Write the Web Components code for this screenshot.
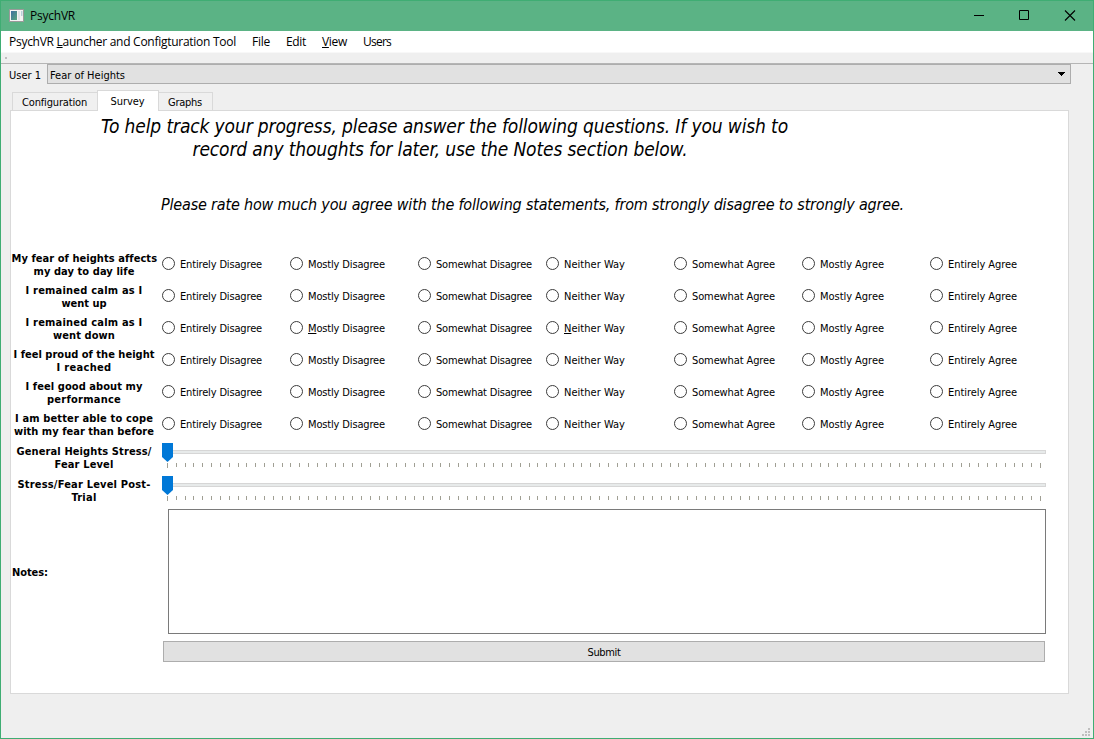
<!DOCTYPE html>
<html lang="en">
<head>
<meta charset="utf-8">
<title>PsychVR</title>
<style>
html,body{margin:0;width:1094px;height:739px;overflow:hidden;background:#efefef}
</style>
</head>
<body>
<psych-window></psych-window>
<script>
const UI = 'font-family:"DejaVu Sans Condensed","DejaVu Sans",sans-serif;font-stretch:condensed;font-size:11px;line-height:13px;color:#000;';

// A run of text whose tracking is adjusted to occupy the requested width.
customElements.define('fit-text', class extends HTMLElement {
  connectedCallback() {
    if (this.shadowRoot) return;
    const root = this.attachShadow({mode: 'open'});
    root.innerHTML = '<style>:host{display:block;white-space:pre}span{display:inline-block}</style><span><slot></slot></span>';
    const span = root.querySelector('span');
    const target = +this.getAttribute('w');
    this.style.width = target + 'px';
    const natural = span.getBoundingClientRect().width;
    this.style.letterSpacing = ((target - natural) / this.textContent.length) + 'px';
  }
});

customElements.define('title-bar', class extends HTMLElement {
  connectedCallback() {
    this.attachShadow({mode: 'open'}).innerHTML = `<style>
      :host{display:flex;height:30px;align-items:center;background:#5bb385;font:12px/16px "Open Sans",sans-serif;color:#000}
      .app{margin:-2px 6px 0 8px} .gap{flex:1}
      .ctl{margin-right:-1px}
    </style>
    <svg class="app" width="15" height="13" viewBox="0 0 15 13"><defs><linearGradient id="g" x2="1" y2="1"><stop stop-color="#3d6fa0"/><stop offset="1" stop-color="#55a57c"/></linearGradient></defs>
      <rect x=".5" y=".5" width="14" height="12" fill="#f4f4f4" stroke="#9a9a9a"/><rect x="2" y="2" width="6" height="9" fill="url(#g)"/><rect x="9" y="2" width="2" height="9" fill="#dfe3e6"/><rect x="12" y="2" width="1.500" height="5" fill="#b9cfd9"/></svg>
    <fit-text w="45">PsychVR</fit-text><div class="gap"></div>
    <svg class="ctl" width="122" height="30" viewBox="0 0 122 30" fill="none" stroke="#000">
      <path d="M2 14.500h10M47.500 9.500h9v9h-9z"/><path d="M93 9.500l10 10M103 9.500l-10 10" stroke-width="1.100"/></svg>`;
  }
});

customElements.define('menu-bar', class extends HTMLElement {
  connectedCallback() {
    this.attachShadow({mode: 'open'}).innerHTML = `<style>
      :host{display:flex;box-sizing:border-box;height:22px;padding:1px 0 0 8px;gap:16px;align-items:center;background:#fff;border-bottom:1px solid #f8f8f8;font:12px/18px "Open Sans",sans-serif;color:#000}
      u{text-decoration-thickness:1px;text-underline-offset:1px;text-decoration-skip-ink:none}
    </style>
    <fit-text w="227">PsychVR <u>L</u>auncher and Configturation Tool</fit-text><fit-text w="18">File</fit-text><fit-text w="20">Edit</fit-text><fit-text w="25"><u>V</u>iew</fit-text><fit-text w="28">Users</fit-text>`;
  }
});

customElements.define('tool-strip', class extends HTMLElement {
  connectedCallback() {
    this.attachShadow({mode: 'open'}).innerHTML = `<style>
      :host{display:block;box-sizing:border-box;height:11px;padding:4px;background:#efefef;border-bottom:1px solid #b5b5b5}
      i{display:block;width:2px;height:2px;background:#bebebe}</style><i></i>`;
  }
});

customElements.define('combo-box', class extends HTMLElement {
  connectedCallback() {
    this.attachShadow({mode: 'open'}).innerHTML = `<style>
      :host{display:flex;box-sizing:border-box;width:1024px;height:20px;padding:2px 5px 0 2px;border:1px solid #adadad;background:#e1e1e1;justify-content:space-between;align-items:center}
      svg{margin-top:-3px}</style>
      <slot></slot><svg width="7" height="4" shape-rendering="crispEdges"><path d="M0 0h7v1H6v1H5v1H4v1H3V3H2V2H1V1H0z"/></svg>`;
  }
});

customElements.define('tab-item', class extends HTMLElement {
  connectedCallback() {
    this.attachShadow({mode: 'open'}).innerHTML = `<style>
      :host{display:flex;box-sizing:border-box;height:18px;border:1px solid #d9d9d9;border-bottom:0;background:#f0f0f0;padding:3px 1px 0 0;justify-content:center}
      :host([selected]){height:21px;background:#fff;margin:0 0 -1px -1px;position:relative;padding-top:4px}
      :host([last]){border-left:0}</style><slot></slot>`;
  }
});

customElements.define('radio-option', class extends HTMLElement {
  connectedCallback() {
    this.attachShadow({mode: 'open'}).innerHTML = `<style>
      :host{display:flex;width:128px;align-items:flex-start;gap:5px}svg{flex:none}</style>
      <svg width="13" height="13"><circle cx="6.500" cy="6.500" r="6" fill="#fff" stroke="#3c3c3c"/></svg><slot></slot>`;
  }
});

// Centred bold label; lines are "text=width" separated by "|".
customElements.define('row-label', class extends HTMLElement {
  connectedCallback() {
    const lines = this.getAttribute('lines').split('|').map(l => {
      const [t, w] = l.split('=');
      return `<fit-text w="${w - 1}">${t}</fit-text>`;
    }).join('');
    this.attachShadow({mode: 'open'}).innerHTML = `<style>
      :host{display:flex;flex-direction:column;width:146px;padding-top:2px;align-items:center;font-weight:bold;flex:none}</style>${lines}`;
  }
});

customElements.define('likert-row', class extends HTMLElement {
  connectedCallback() {
    const m = this.hasAttribute('mnemonic');
    const u = s => m ? `<u>${s[0]}</u>${s.slice(1)}` : s;
    const opts = [['Entirely Disagree',82],[u('Mostly Disagree'),77],['Somewhat Disagree',96],[u('Neither Way'),61],['Somewhat Agree',83],['Mostly Agree',64],['Entirely Agree',69]];
    this.attachShadow({mode: 'open'}).innerHTML = `<style>
      :host{display:flex;height:32px;align-items:center}
      .opts{display:flex;align-self:flex-start;margin:9px 0 0 5px}
      fit-text{padding-top:1px}
      u{text-decoration-thickness:1px;text-underline-offset:1px}</style>
      <row-label lines="${this.getAttribute('lines')}"></row-label>
      <div class="opts">${opts.map(([t,w]) => `<radio-option><fit-text w="${w}">${t}</fit-text></radio-option>`).join('')}</div>`;
  }
});

customElements.define('slider-row', class extends HTMLElement {
  connectedCallback() {
    let ticks = '';
    for (let i = 0; i < 100; i++) ticks += `M${5 + Math.round(i * 873 / 99)} 20h1v${i % 99 ? 4 : 5}h-1z`;
    this.attachShadow({mode: 'open'}).innerHTML = `<style>
      :host{display:flex;height:33px;align-items:center}svg{margin:2px 0 0 5px}</style>
      <row-label lines="${this.getAttribute('lines')}"></row-label>
      <svg width="884" height="29"><rect x=".5" y="7.500" width="883" height="3" fill="#e7eaea" stroke="#d6d6d6"/>
      <path d="${ticks}" fill="#a09f94" shape-rendering="crispEdges"/><path d="M0 0h11v14l-5.500 5L0 14z" fill="#0078d7"/></svg>`;
  }
});

customElements.define('survey-panel', class extends HTMLElement {
  connectedCallback() {
    this.attachShadow({mode: 'open'}).innerHTML = `<style>
      :host{display:block;box-sizing:border-box;width:1059px;height:584px;border:1px solid #d9d9d9;background:#fff}
      .intro{display:flex;flex-direction:column;align-items:center;width:858px;height:76px;padding-top:4px;box-sizing:border-box;font-size:19px;line-height:23px;font-style:italic}
      .intro :first-child{margin-left:9px}
      .sub{height:61px;padding:8px 0 0 150px;box-sizing:border-box;font-size:16px;line-height:19px;font-style:italic}
      .notes{display:flex;align-items:center;height:125px;margin-top:3px}
      .notes b{width:157px;box-sizing:border-box;padding:2px 0 0 1px}
      .box{box-sizing:border-box;width:878px;height:125px;border:1px solid #7a7a7a;background:#fff}
      .submit{display:flex;box-sizing:border-box;width:882px;height:21px;margin:7px 0 0 152px;border:1px solid #adadad;background:#e1e1e1;align-items:center;justify-content:center;padding-top:1px}
      </style>
      <div class="intro"><fit-text w="687">To help track your progress, please answer the following questions. If you wish to</fit-text><fit-text w="495">record any thoughts for later, use the Notes section below.</fit-text></div>
      <div class="sub"><fit-text w="743">Please rate how much you agree with the following statements, from strongly disagree to strongly agree.</fit-text></div>
      <likert-row lines="My fear of heights affects=146|my day to day life=102"></likert-row>
      <likert-row lines="I remained calm as I=118|went up=46"></likert-row>
      <likert-row mnemonic lines="I remained calm as I=118|went down=63"></likert-row>
      <likert-row lines="I feel proud of the height=142|I reached=56"></likert-row>
      <likert-row lines="I feel good about my=118|performance=75"></likert-row>
      <likert-row lines="I am better able to cope=139|with my fear than before=141"></likert-row>
      <slider-row lines="General Heights Stress/=136|Fear Level=60"></slider-row>
      <slider-row lines="Stress/Fear Level Post-=134|Trial=26"></slider-row>
      <div class="notes"><b><fit-text w="36">Notes:</fit-text></b><div class="box"></div></div>
      <div class="submit"><fit-text w="33">Submit</fit-text></div>`;
  }
});

customElements.define('psych-window', class extends HTMLElement {
  connectedCallback() {
    this.attachShadow({mode: 'open'}).innerHTML = `<style>
      :host{display:flex;flex-direction:column;box-sizing:border-box;width:1094px;height:739px;border:1px solid #3fad73;background:#efefef;${UI}}
      .user{display:flex;align-items:center;height:20px}
      .user>fit-text{margin:2px 6px 0 8px}
      .tabs{display:flex;align-items:flex-end;margin:6px 0 0 11px;height:20px}
      survey-panel{margin-left:9px}
      .foot{flex:1;display:flex;align-items:flex-end;justify-content:flex-end;padding:0 3px 2px 0}
      </style>
      <title-bar></title-bar><menu-bar></menu-bar><tool-strip></tool-strip>
      <div class="user"><fit-text w="32">User 1</fit-text><combo-box><fit-text w="75">Fear of Heights</fit-text></combo-box></div>
      <div class="tabs"><tab-item style="width:86px"><fit-text w="65">Configuration</fit-text></tab-item><tab-item selected style="width:62px"><fit-text w="34">Survey</fit-text></tab-item><tab-item last style="width:54px"><fit-text w="34">Graphs</fit-text></tab-item></div>
      <survey-panel></survey-panel>
      <div class="foot"><svg width="8" height="8" fill="#bfbfbf"><path d="M6 0h2v2H6zM3 3h2v2H3zM6 3h2v2H6zM0 6h2v2H0zM3 6h2v2H3zM6 6h2v2H6z"/></svg></div>`;
  }
});
</script>
</body>
</html>
